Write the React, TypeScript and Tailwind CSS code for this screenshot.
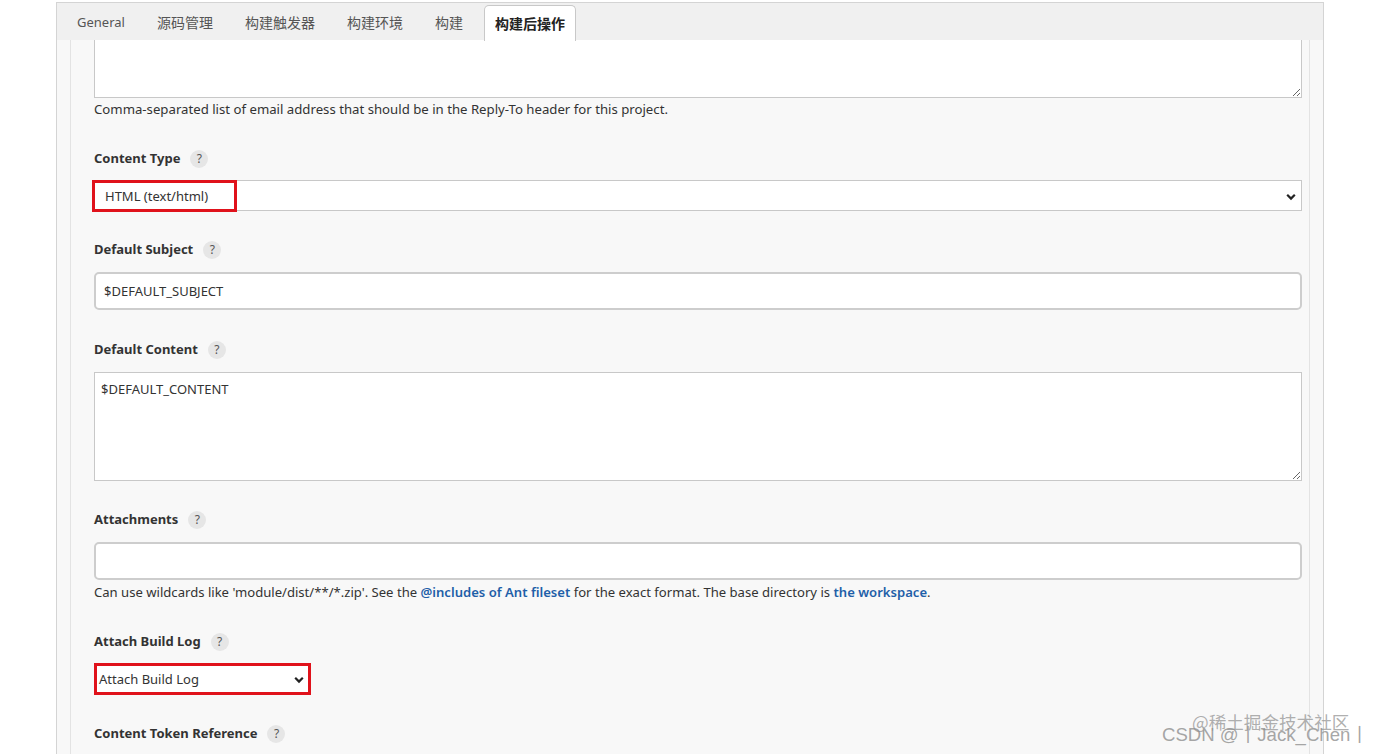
import React from "react";

const font = {
  fontFamily: '"Noto Sans", "Noto Sans CJK SC", sans-serif',
};

function Help() {
  return (
    <span className="ml-[10px] inline-flex h-[18px] w-[18px] items-center justify-center rounded-full bg-[#e6e6e6] text-[12px] font-normal text-[#555]">
      ?
    </span>
  );
}

function Label({ text, className = "" }: { text: string; className?: string }) {
  return (
    <div className={`flex h-[20px] items-center text-[13px] font-bold text-[#333] ${className}`}>
      <span>{text}</span>
      <Help />
    </div>
  );
}

function Chevron() {
  return (
    <svg width="10" height="8" viewBox="0 0 10 8" className="shrink-0">
      <path d="M1.2 1.8 L5 5.6 L8.8 1.8" fill="none" stroke="#222" strokeWidth="2.2" />
    </svg>
  );
}

const tabs = ["源码管理", "构建触发器", "构建环境", "构建"];

export default function App() {
  return (
    <div className="relative h-[754px] w-full overflow-hidden bg-white text-[#333]" style={font}>
      <div className="ml-[56px] w-[1268px] pt-[2px]">
        {/* tab bar */}
        <div className="flex h-[38px] items-end gap-[32px] border-x border-t border-[#d4d4d4] bg-[#f0f0f0] pl-[20px]">
          <div className="flex h-full items-center pt-[2px] text-[13px] text-[#555]">General</div>
          {tabs.map((t) => (
            <div key={t} className="flex h-full items-center pt-[2px] text-[14px] text-[#555]">
              {t}
            </div>
          ))}
          <div className="relative -mb-px -ml-[11px] flex h-[36px] items-center rounded-t-[5px] border-x border-t border-[#c8c8c8] bg-white px-[10px] text-[14px] font-bold text-[#222]">
            构建后操作
          </div>
        </div>

        {/* body */}
        <div className="h-[716px] border-x border-[#d4d4d4] bg-[#f8f8f8] px-[13px]">
          <div className="h-full border-x border-[#e3e3e3] bg-[#f8f8f8] pl-[23px] pr-[7px]">
            <textarea
              readOnly
              className="block h-[58px] w-full border border-t-0 border-[#c8c8c8] bg-white outline-none"
            />
            <div className="mt-[2px] h-[18px] text-[13.2px] leading-[18px] text-[#333]">
              Comma-separated list of email address that should be in the Reply-To header for this project.
            </div>

            <Label text="Content Type" className="mt-[31px]" />
            <div className="relative mt-[11px] flex h-[31px] items-center justify-between border border-[#c8c8c8] bg-white pl-[10px] pr-[5px] pt-[2px] text-[13px] text-[#333]">
              <span>HTML (text/html)</span>
              <Chevron />
              <div className="absolute -left-[3px] -top-px h-[32px] w-[145px] border-[3px] border-[#e0121b]" />
            </div>

            <Label text="Default Subject" className="mt-[29px]" />
            <div className="mt-[12px] flex h-[38px] items-center rounded-[5px] border-2 border-[#cdcdcd] bg-white pl-[8px] pt-[1px] text-[13px] text-[#333]">
              $DEFAULT_SUBJECT
            </div>

            <Label text="Default Content" className="mt-[30px]" />
            <textarea
              readOnly
              value="$DEFAULT_CONTENT"
              className="mt-[12px] block h-[109px] w-full resize-y border border-[#c8c8c8] bg-white px-[6px] py-[7px] text-[13px] text-[#333] outline-none"
              style={font}
            />

            <Label text="Attachments" className="mt-[29px]" />
            <div className="mt-[12px] h-[38px] rounded-[5px] border-2 border-[#cdcdcd] bg-white" />
            <div className="mt-[3px] h-[18px] text-[13.1px] leading-[18px] text-[#333]">
              Can use wildcards like 'module/dist/**/*.zip'. See the{" "}
              <span className="font-semibold text-[#1f5fa8]">@includes of Ant fileset</span> for the exact format. The base
              directory is <span className="font-semibold text-[#1f5fa8]">the workspace</span>.
            </div>

            <Label text="Attach Build Log" className="mt-[31px]" />
            <div className="mt-[11px] flex h-[32px] w-[217px] items-center justify-between border-[3px] border-[#e0121b] bg-white pl-[2px] pr-[4px] pt-[2px] text-[13px] text-[#333]">
              <span>Attach Build Log</span>
              <Chevron />
            </div>

            <Label text="Content Token Reference" className="mt-[29px]" />
          </div>
        </div>
      </div>

      {/* watermark */}
      <div
        className="absolute left-[1192px] top-[711px] text-[17.6px] leading-[22px] text-[#9a9a9a]/80"
        style={{ fontFamily: '"Noto Sans CJK SC", sans-serif' }}
      >
        @稀土掘金技术社区
      </div>
      <div
        className="absolute left-[1162px] top-[723px] text-[18.6px] leading-[24px] text-[#8f8f8f]/80"
        style={{ fontFamily: '"Liberation Sans", "Noto Sans CJK SC", sans-serif' }}
      >
        CSDN @丨Jack_Chen丨
      </div>
    </div>
  );
}
